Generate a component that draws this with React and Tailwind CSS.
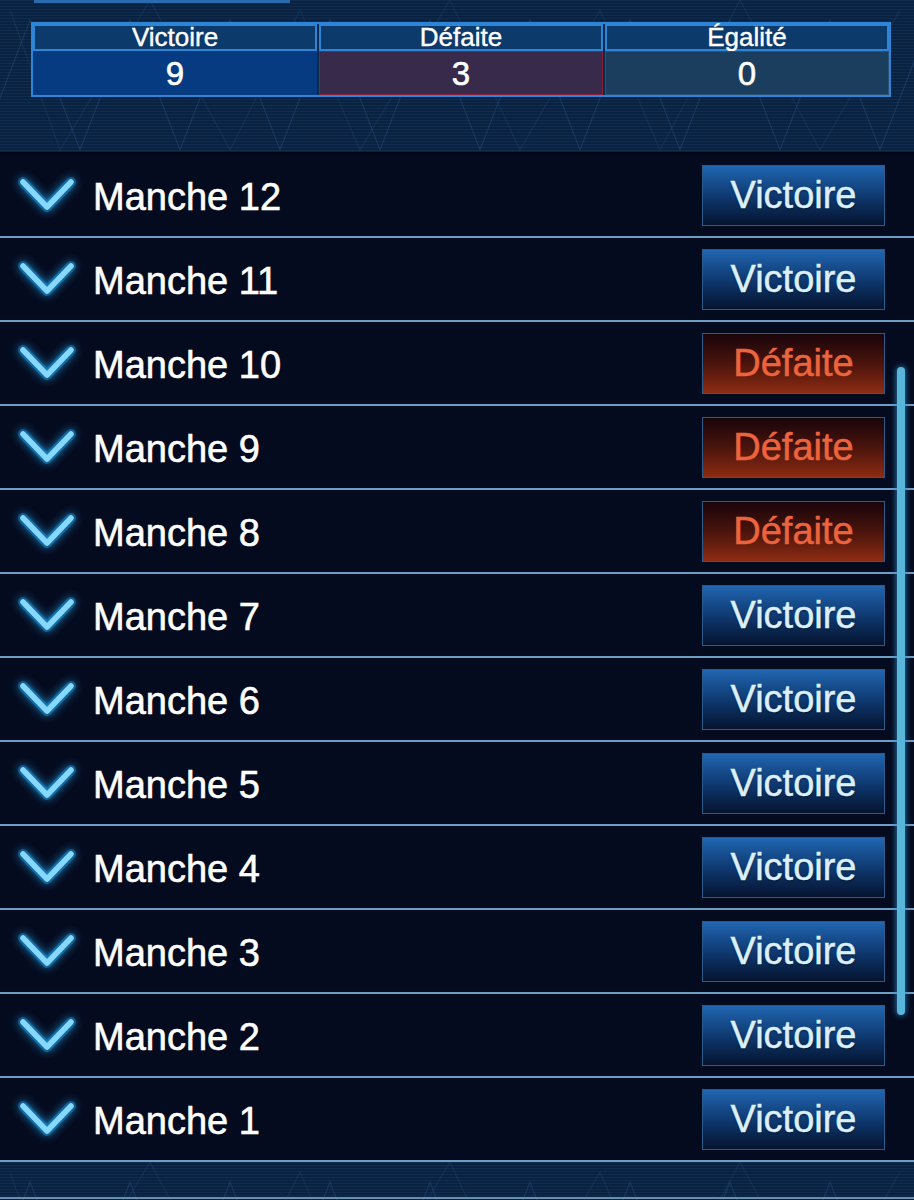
import React from 'react';

const rounds = [
    { n: 12, win: true },
    { n: 11, win: true },
    { n: 10, win: false },
    { n: 9, win: false },
    { n: 8, win: false },
    { n: 7, win: true },
    { n: 6, win: true },
    { n: 5, win: true },
    { n: 4, win: true },
    { n: 3, win: true },
    { n: 2, win: true },
    { n: 1, win: true },
];

// decorative background: scanlines + thin zigzag lines
const Pattern = ({ height }) => (
    <div className="absolute inset-0 overflow-hidden bg-[#0a2242] bg-[repeating-linear-gradient(to_bottom,rgba(120,170,230,0.07)_0px,rgba(120,170,230,0.07)_1px,transparent_1px,transparent_3px)]">
        <svg width="914" height={height} className="absolute left-0 top-0" fill="none" stroke="#2a5786" strokeOpacity="0.4" strokeWidth="1.1">
            <polyline points="-20,150 30,20 80,150 130,20 180,150 230,20 280,150 330,20 380,150 430,20 480,150 530,20 580,150 630,20 680,150 730,20 780,150 830,20 880,150 930,20" />
            <polyline points="10,10 60,150 150,0 230,150 300,10 360,150 450,0 520,150 600,10 660,150 740,0 820,150 900,10" strokeOpacity="0.25" />
        </svg>
    </div>
);

const Chevron = () => (
    <svg width="58" height="36" viewBox="0 0 58 36" className="shrink-0 drop-shadow-[0_0_5px_#1e9be0]">
        <polyline points="5,5 29,30 53,5" fill="none" stroke="#1f9fe6" strokeWidth="10" strokeLinecap="round" strokeLinejoin="round" strokeOpacity="0.4" />
        <polyline points="5,5 29,30 53,5" fill="none" stroke="#86d8ff" strokeWidth="5.5" strokeLinecap="round" strokeLinejoin="round" />
    </svg>
);

const ResultButton = ({ win }) =>
    win ? (
        <div className="w-[183px] h-[61px] flex items-center justify-center border border-[#2b5b8a] bg-gradient-to-b from-[#2166b2] via-[#0f3a72] to-[#051430] text-[#dcefff] text-[38px] leading-none [-webkit-text-stroke:0.5px_#dcefff] [text-shadow:0_1px_2px_rgba(0,0,0,0.6)]">
            Victoire
        </div>
    ) : (
        <div className="w-[183px] h-[61px] flex items-center justify-center border border-[#2b5b8a] bg-gradient-to-b from-[#1a0509] via-[#4a140c] to-[#8e2c12] text-[#ec643c] text-[38px] leading-none [-webkit-text-stroke:0.5px_#ec643c]">
            Défaite
        </div>
    );

export default function App() {
    return (
        <div className="relative w-[914px] h-[1200px] overflow-hidden bg-[#050b1f] font-['Liberation_Sans',Arial,sans-serif]">
            {/* Score summary */}
            <div className="relative h-[154px]">
                <Pattern height={154} />
                <div className="relative">
                    <div className="ml-[34px] w-[256px] h-[3px] bg-[#2a6bb0]" />
                    <div className="mt-[19px] ml-[31px] w-[860px] border-2 border-[#2e84d6] grid grid-cols-3 gap-x-[2px] bg-[#0a2a50]">
                        {['Victoire', 'Défaite', 'Égalité'].map((h) => (
                            <div key={h} className="h-[27px] border-2 border-[#2e84d6] bg-[#0c3a6a] text-white text-[26px] leading-[23px] text-center [-webkit-text-stroke:0.4px_white]">
                                {h}
                            </div>
                        ))}
                        <div className="h-[44px] bg-[#063b82] text-white text-[33px] leading-[46px] text-center [-webkit-text-stroke:0.6px_white]">9</div>
                        <div className="h-[44px] bg-[#372a4b] border border-[#8a2038] text-white text-[33px] leading-[44px] text-center [-webkit-text-stroke:0.6px_white]">3</div>
                        <div className="h-[44px] bg-[#1b3d5e] border border-[#2c5275] text-white text-[33px] leading-[44px] text-center [-webkit-text-stroke:0.6px_white]">0</div>
                    </div>
                </div>
                <div className="absolute left-0 right-0 bottom-0 h-[2px] bg-[#020614]" />
            </div>

            {/* Round list */}
            <div className="relative flex flex-col">
                {rounds.map((r) => (
                    <div key={r.n} className="h-[84px] flex items-center border-b-2 border-[#6f9ec5] bg-[#050b1f] pl-[18px] pr-[29px]">
                        <Chevron />
                        <span className="ml-[17px] mt-[3px] text-white text-[38px] leading-none [-webkit-text-stroke:0.6px_white]">
                            Manche {r.n}
                        </span>
                        <div className="ml-auto">
                            <ResultButton win={r.win} />
                        </div>
                    </div>
                ))}
            </div>

            {/* bottom strip */}
            <div className="relative h-[38px]">
                <Pattern height={38} />
                <div className="absolute left-0 right-0 bottom-[1px] h-[2px] bg-[#6a8fb0]" />
            </div>

            {/* scrollbar */}
            <div className="absolute left-[897px] top-[367px] w-[8px] h-[648px] rounded-full bg-[#5ab5da] shadow-[0_0_6px_#2a8fc8]" />
        </div>
    );
}
